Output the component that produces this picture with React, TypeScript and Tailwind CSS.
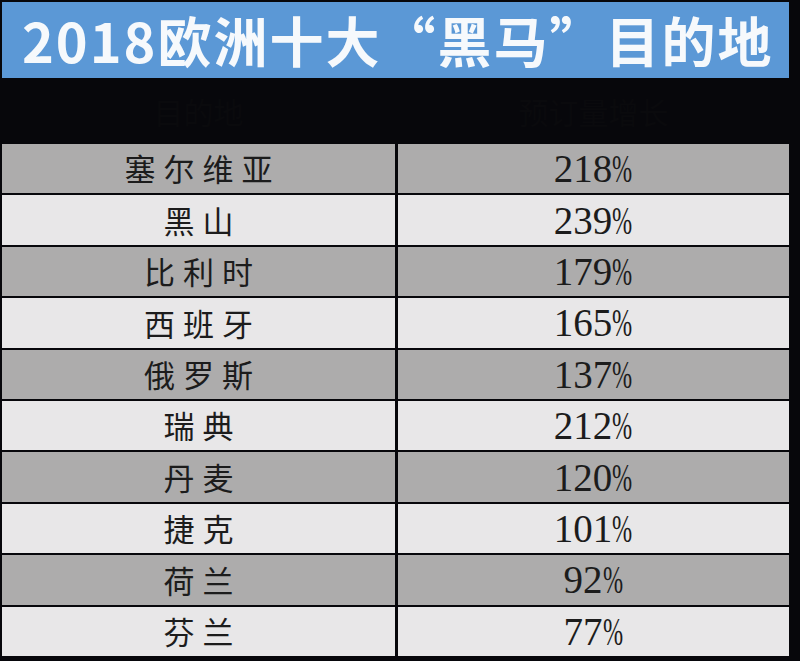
import React from 'react';

const rows: { name: string; growth: string }[] = [
  { name: '塞尔维亚', growth: '218' },
  { name: '黑山', growth: '239' },
  { name: '比利时', growth: '179' },
  { name: '西班牙', growth: '165' },
  { name: '俄罗斯', growth: '137' },
  { name: '瑞典', growth: '212' },
  { name: '丹麦', growth: '120' },
  { name: '捷克', growth: '101' },
  { name: '荷兰', growth: '92' },
  { name: '芬兰', growth: '77' },
];

const cjk = { fontFamily: '"Noto Sans CJK SC", sans-serif' };
const serif = { fontFamily: '"Liberation Serif", "Noto Sans CJK SC", serif' };

export default function App() {
  return (
    <div className="w-[800px] h-[661px] bg-[#07070b] pt-[2px] pl-[2px] pr-[11px] overflow-hidden">
      {/* title bar */}
      <div
        className="h-[76px] bg-[#5b98d6] flex items-center pl-[20px] text-[54px] font-bold text-[#f6f9fc] tracking-[2px] leading-none whitespace-nowrap"
        style={cjk}
      >
        2018欧洲十大“黑马”目的地
      </div>

      {/* header row, text almost invisible on black */}
      <div className="h-[66px] grid grid-cols-[393px_1fr] gap-[3px] text-[30px] text-[#0a0a0d]" style={cjk}>
        <div className="flex items-center justify-center">目的地</div>
        <div className="flex items-center justify-center">预订量增长</div>
      </div>

      <div className="h-[512px] grid grid-rows-10 gap-[2px]">
        {rows.map((r, idx) => {
          const bg = idx % 2 === 0 ? 'bg-[#adacac]' : 'bg-[#e8e7e8]';
          return (
            <div key={idx} className="grid grid-cols-[393px_1fr] gap-[3px] text-[#1c1c1c]">
              <div
                className={`flex items-center justify-center text-[31px] tracking-[8px] pl-[8px] ${bg}`}
                style={cjk}
              >
                {r.name}
              </div>
              <div
                className={`flex items-center justify-center text-[39px] leading-none ${bg}`}
                style={serif}
              >
                <span>{r.growth}</span>
                <span className="inline-block w-[21px]">
                  <span className="inline-block origin-left scale-x-[0.62]">%</span>
                </span>
              </div>
            </div>
          );
        })}
      </div>
    </div>
  );
}
